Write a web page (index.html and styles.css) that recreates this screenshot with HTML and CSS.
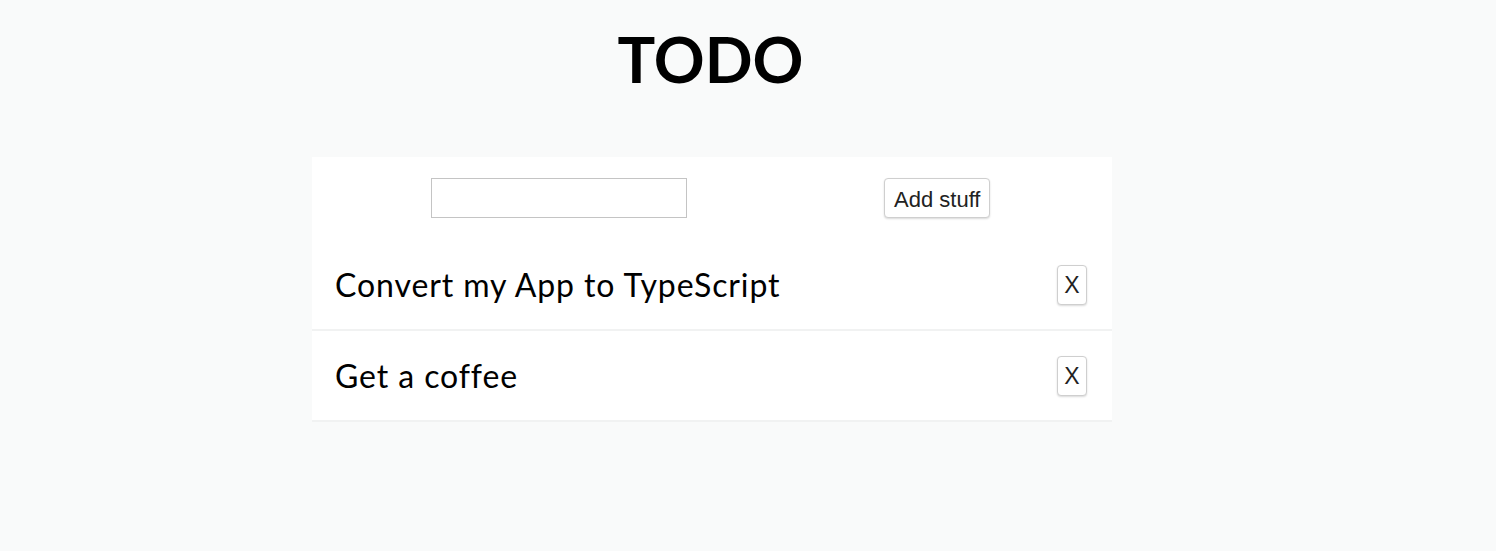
FILE: index.html
```html
<!DOCTYPE html>
<html lang="en">
<head>
<meta charset="utf-8">
<title>TODO</title>
<link rel="stylesheet" href="styles.css">
</head>
<body>
<div class="app">
  <h1 class="title">TODO</h1>
  <div class="card">
    <form class="add-form">
      <input class="add-input" type="text">
      <button class="btn add-btn" type="button">Add stuff</button>
    </form>
    <ul class="list">
      <li class="item"><span class="item-text">Convert my App to TypeScript</span><button class="btn del-btn" type="button">X</button></li>
      <li class="item"><span class="item-text">Get a coffee</span><button class="btn del-btn" type="button">X</button></li>
    </ul>
  </div>
</div>
</body>
</html>
```

FILE: styles.css
```css
html, body {
  margin: 0;
  padding: 0;
  background: #f9fafa;
}
body {
  font-family: "Lato", "Noto Sans", sans-serif;
  color: #000;
}
.app {
  width: 800px;
  margin-left: 312px;
  display: flex;
  flex-direction: column;
  align-items: center;
}
.title {
  margin: 19px 0 0 -3px;
  font-size: 63px;
  line-height: 80px;
  font-weight: 700;
  letter-spacing: 0;
  height: 138px;
}
.card {
  width: 800px;
  background: #fff;
  box-sizing: border-box;
}
.add-form {
  display: flex;
  justify-content: space-around;
  align-items: center;
  padding: 21px 24px 22px;
  margin: 0;
}
.add-input {
  width: 256px;
  height: 40px;
  box-sizing: border-box;
  border: 1px solid #c4c4c4;
  padding: 0 6px;
  font-size: 18px;
  margin: 0 0 0 -3px;
}
.btn {
  font-family: "Liberation Sans", Arial, sans-serif;
  background: #fff;
  border: 1px solid #cfcfcf;
  border-radius: 4px;
  box-shadow: 0 1px 2px rgba(0,0,0,0.15);
  color: #222;
  height: 40px;
  box-sizing: border-box;
  cursor: pointer;
}
.add-btn {
  width: 106px;
  font-size: 22px;
  padding: 3px 0 0;
  margin-left: 2px;
}
.list {
  list-style: none;
  margin: 0;
  padding: 0;
}
.item {
  display: flex;
  align-items: center;
  justify-content: space-between;
  height: 91px;
  box-sizing: border-box;
  padding: 0 25px 0 23px;
  border-bottom: 2px solid #f1f2f2;
}
.item-text {
  font-size: 32px;
  letter-spacing: 0.9px;
}
.del-btn {
  width: 30px;
  font-size: 23px;
  padding: 2px 0 0;
}
```
